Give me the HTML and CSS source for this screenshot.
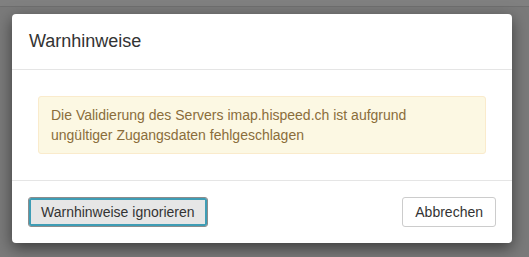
FILE: index.html
```html
<!DOCTYPE html>
<html lang="de">
<head>
  <meta charset="UTF-8" />
  <title>Warnhinweise</title>
  <link rel="stylesheet" href="styles.css">
</head>
<body>
  <div class="topbar"></div>
  <div class="modal">
    <div class="modal-header">
      <h4 class="modal-title">Warnhinweise</h4>
    </div>
    <div class="modal-body">
      <div class="alert">Die Validierung des Servers imap.hispeed.ch ist aufgrund<br>ungültiger Zugangsdaten fehlgeschlagen</div>
    </div>
    <div class="modal-footer">
      <button class="btn btn-focus">Warnhinweise ignorieren</button>
      <button class="btn">Abbrechen</button>
    </div>
  </div>
</body>
</html>
```

FILE: styles.css
```css
html, body {
  height: 100%;
}
body {
  margin: 0;
  background: #7a7a7a;
  font-family: "Liberation Sans", Arial, sans-serif;
  font-size: 14px;
  color: #333;
}
.topbar {
  height: 6px;
  background: #808080;
  border-bottom: 1px solid #6f6f6f;
}
.modal {
  margin: 7px 0 0 12px;
  width: 500px;
  background: #fff;
  border-radius: 4px;
  box-shadow: 0 5px 15px rgba(0, 0, 0, 0.5);
}
.modal-header {
  padding: 15px 17px;
  border-bottom: 1px solid #e5e5e5;
}
.modal-title {
  margin: 0;
  font-size: 18px;
  font-weight: normal;
  line-height: 25px;
}
.modal-body {
  padding: 26px;
}
.alert {
  padding: 8px 12px;
  line-height: 20px;
  background: #fcf8e3;
  border: 1px solid #faebcc;
  border-radius: 3px;
  color: #8a6d3b;
}
.modal-footer {
  display: flex;
  justify-content: space-between;
  padding: 16px;
  border-top: 1px solid #e5e5e5;
}
.btn {
  font-family: inherit;
  font-size: 14px;
  line-height: 20px;
  padding: 4px 12px;
  color: #333;
  background: #fff;
  border: 1px solid #ccc;
  border-radius: 3px;
}
.btn-focus {
  background: #e6e6e6;
  border-color: #8c8c8c;
  box-shadow: inset 0 0 0 2px #3f9db5;
}
```
